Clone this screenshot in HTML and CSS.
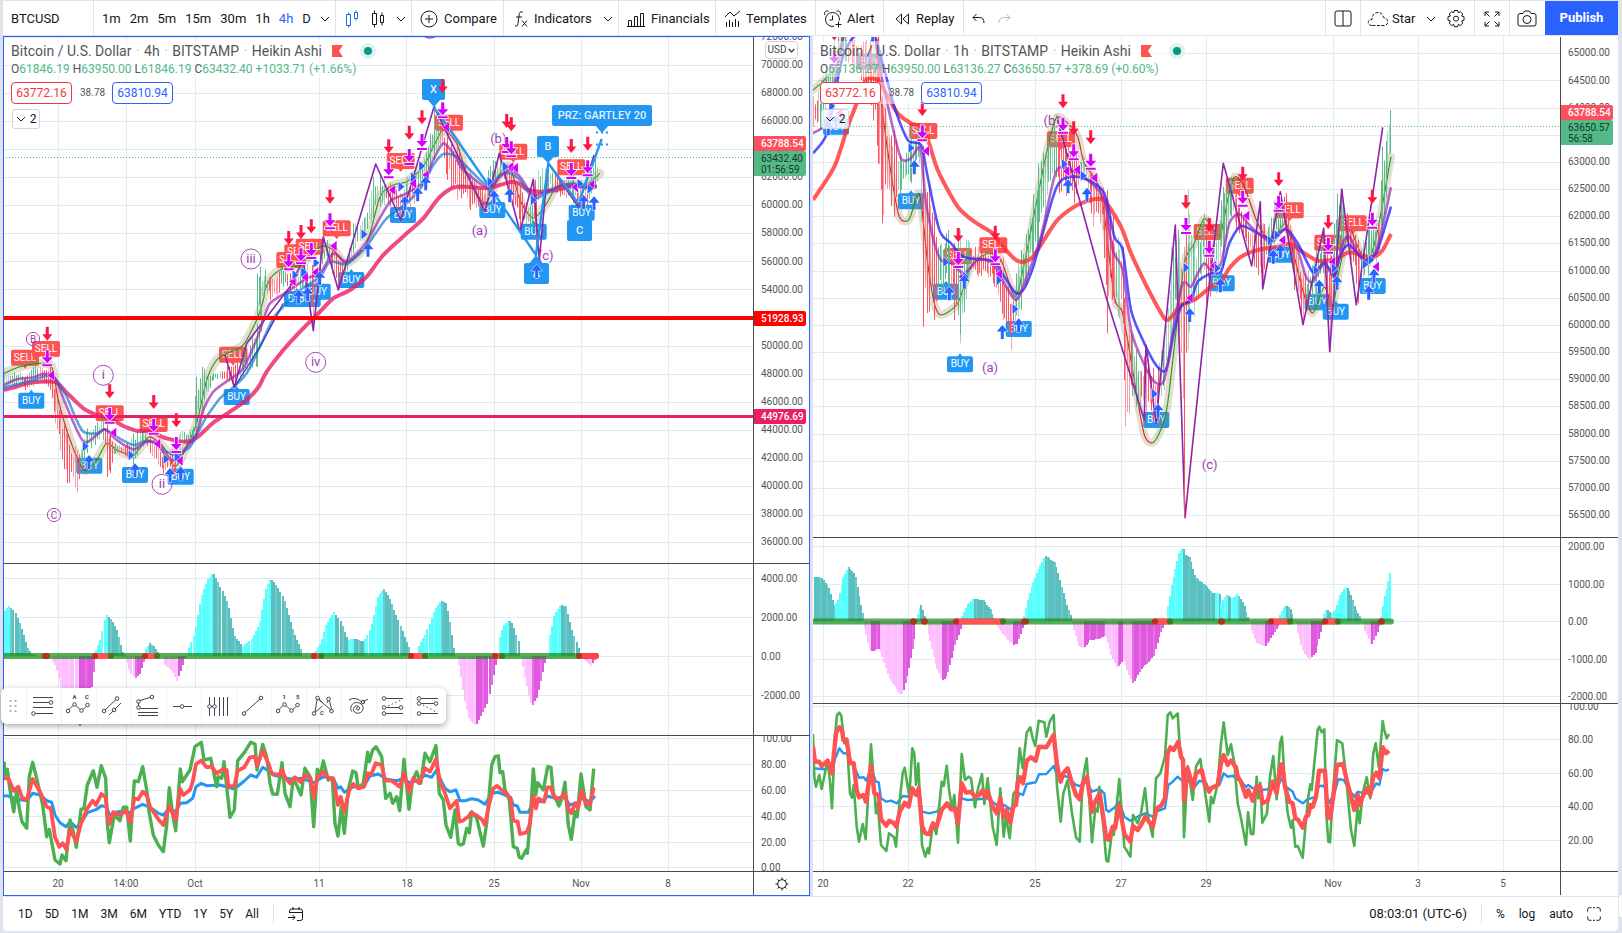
FILE: index.html
```html
<!DOCTYPE html>
<html lang="en">
<head>
<meta charset="utf-8">
<title>BTCUSD 63788.54</title>
<link rel="stylesheet" href="styles.css">
</head>
<body>
<svg class="defs" aria-hidden="true">
  <symbol id="chev" viewBox="0 0 10 6"><path d="M1 1l4 4 4-4"/></symbol>
</svg>

<header class="topbar">
  <div class="group g-symbol"><button class="tool">BTCUSD</button></div>
  <div class="group g-intervals">
    <button class="tool">1m</button><button class="tool">2m</button><button class="tool">5m</button><button class="tool">15m</button><button class="tool">30m</button><button class="tool">1h</button><button class="tool on">4h</button><button class="tool">D</button>
    <button class="tool" aria-label="More intervals"><svg class="chev"><use href="#chev"/></svg></button>
  </div>
  <div class="group g-style">
    <button class="tool on" aria-label="Heikin Ashi"><svg width="16" height="20" viewBox="0 0 16 20"><path d="M2.500 5.500h4v11h-4zM10.500 3.500h3v6h-3zM4.500 3.500v2M4.500 16.500v2M12 1.500v2M12 9.500v2"/></svg></button>
    <button class="tool" aria-label="Candles"><svg width="14" height="20" viewBox="0 0 14 20"><path d="M1.500 4.500h4v11h-4zM9.500 6.500h3v7h-3zM3.500 1.500v3M3.500 15.500v3M11 3.500v3M11 13.500v3"/></svg></button>
    <button class="tool" aria-label="Chart styles"><svg class="chev"><use href="#chev"/></svg></button>
  </div>
  <div class="group g-compare"><button class="tool"><svg width="18" height="18" viewBox="0 0 18 18"><circle cx="9" cy="9" r="8"/><path d="M9 5v8M5 9h8"/></svg>Compare</button></div>
  <div class="group g-indicators">
    <button class="tool"><svg width="14" height="18" viewBox="0 0 14 18"><path d="M9 2.500C7 1 5.500 2 5.200 4.500L4 13.500C3.700 16 2.500 16.800 1 15.800M2 7h6M8 10.500l5 6M13 10.500l-5 6"/></svg>Indicators</button>
    <button class="tool" aria-label="Favorite indicators"><svg class="chev"><use href="#chev"/></svg></button>
  </div>
  <div class="group g-financials"><button class="tool"><svg width="18" height="18" viewBox="0 0 18 18"><path d="M1.500 10.500h3v6h-3zM7.500 6.500h3v10h-3zM13.500 3.500h3v13h-3zM0 16.500h18"/></svg>Financials</button></div>
  <div class="group g-templates"><button class="tool"><svg width="18" height="18" viewBox="0 0 18 18"><path d="M1 7l5-5 4 4 6-5M2.500 12v5M5.500 10v7M8.500 12v5M11.500 9v8M14.500 11v6"/></svg>Templates</button></div>
  <div class="group g-alert"><button class="tool"><svg width="20" height="20" viewBox="0 0 20 20"><path d="M16.400 11.500A7 7 0 1 0 11 17.300M9.500 6.500v4.500h-3M2 6C.5 3.500 3 1 5.500 2.200M17 6C18.500 3.500 16 1 13.500 2.200M15.500 12.500v6M12.500 15.500h6"/></svg>Alert</button></div>
  <div class="group g-replay"><button class="tool"><svg width="15" height="14" viewBox="0 0 15 14"><path d="M6.500 2v10L1 7zM13.500 2v10L8 7z"/></svg>Replay</button></div>
  <div class="group g-undo">
    <button class="tool" aria-label="Undo"><svg width="13" height="12" viewBox="0 0 13 12"><path d="M4.500 1L1 4.500 4.500 8M1 4.500h6.500q4.500 0 4.500 5.500"/></svg></button>
    <button class="tool faint" aria-label="Redo"><svg width="13" height="12" viewBox="0 0 13 12"><path d="M8.500 1L12 4.500 8.500 8M12 4.500H5.500Q1 4.500 1 10"/></svg></button>
  </div>
  <div class="group g-layout"><button class="tool" aria-label="Select layout"><svg width="18" height="17" viewBox="0 0 18 17"><rect x="1" y="1" width="16" height="15" rx="2"/><path d="M9 1v15"/></svg></button></div>
  <div class="group g-cloud">
    <button class="tool"><svg width="22" height="16" viewBox="0 0 22 16"><path stroke-dasharray="3 1.500" d="M5 14.500C0 14.500 0 8.500 5 8.500C5 0 15 -1 16.500 6.500C22 7 22 14.500 17 14.500Z"/></svg>Star</button>
    <button class="tool" aria-label="Manage layouts"><svg class="chev"><use href="#chev"/></svg></button>
    <button class="tool" aria-label="Settings"><svg width="20" height="20" viewBox="0 0 20 20"><path d="M8.300 1.500h3.400l.6 2.200 2-1.100 2.500 2.400-1.200 2 2.400.7v3.600l-2.400.7 1.200 2-2.500 2.500-2-1.200-.6 2.400H8.300l-.6-2.400-2 1.200L3.200 14l1.200-2L2 11.300V7.700L4.400 7l-1.200-2 2.500-2.400 2 1.100z"/><circle cx="10" cy="9.700" r="2.500"/></svg></button>
  </div>
  <div class="group g-full"><button class="tool" aria-label="Fullscreen"><svg width="16" height="16" viewBox="0 0 16 16"><path d="M1 5V1h4M1 1l4.500 4.500M11 1h4v4M15 1l-4.500 4.500M1 11v4h4M1 15l4.500-4.500M15 11v4h-4M15 15l-4.500-4.500"/></svg></button></div>
  <div class="group g-camera"><button class="tool" aria-label="Take a snapshot"><svg width="20" height="17" viewBox="0 0 20 17"><path d="M3 3.500h3l1.500-2.500h5L14 3.500h3q2 0 2 2V14q0 2-2 2H3q-2 0-2-2V5.500q0-2 2-2z"/><circle cx="10" cy="9.500" r="4"/></svg></button></div>
  <button class="publish">Publish</button>
</header>

<main class="charts">
  <section class="chart chart-a active" aria-label="BTCUSD 4h">
    <div class="plot"><svg class="canvas" id="a-main" role="img" aria-label="Price, 4 hours"></svg>
      <div class="legend">
        <h1 class="title">Bitcoin / U.S. Dollar <i>·</i> 4h <i>·</i> BITSTAMP <i>·</i> Heikin Ashi <svg class="flag" viewBox="0 0 11 12"><path d="M0 0h11L7 6l4 6H0z"/></svg><b class="live"></b></h1>
        <p class="ohlc"><span>O<em>61846.19</em></span><span>H<em>63950.00</em></span><span>L<em>61846.19</em></span><span>C<em>63432.40</em></span><em>+1033.71 (+1.66%)</em></p>
        <div class="quotes"><button class="quote sell">63772.16</button><span>38.78</span><button class="quote buy">63810.94</button></div>
        <button class="fold"><svg class="chev"><use href="#chev"/></svg>2</button>
      </div>
    </div>
    <div class="scale"><svg class="canvas" id="a-main-axis"></svg><button class="unit">USD<svg class="chev small"><use href="#chev"/></svg></button></div>
    <div class="plot"><svg class="canvas" id="a-hist" role="img" aria-label="Oscillator histogram"></svg></div>
    <div class="scale"><svg class="canvas" id="a-hist-axis"></svg></div>
    <div class="plot"><svg class="canvas" id="a-rsi" role="img" aria-label="RSI lines"></svg></div>
    <div class="scale"><svg class="canvas" id="a-rsi-axis"></svg></div>
    <div class="plot"><svg class="canvas" id="a-time"></svg></div>
    <div class="scale corner"><button class="tool" aria-label="Scale settings"><svg width="14" height="14" viewBox="0 0 14 14"><circle cx="7" cy="7" r="4.300"/><path d="M7 .5v2M7 11.500v2M.5 7h2M11.500 7h2M2.400 2.400l1.400 1.400M10.200 10.200l1.400 1.400M2.400 11.600l1.400-1.400M10.200 3.800l1.400-1.400"/></svg></button></div>
    <div class="drawbar" role="toolbar" aria-label="Favorite drawing tools">
      <span class="grip"><svg width="8" height="12" viewBox="0 0 8 12"><path stroke-dasharray="2 3" stroke-width="2" d="M1.500 0v12M6.500 0v12"/></svg></span>
      <button aria-label="Fib retracement"><svg viewBox="0 0 24 24"><path d="M2 3.500h20M2 8.500h16M2 13.500h20M4.500 19.500H22"/><circle cx="20" cy="8.500" r="1.800"/><circle cx="2.500" cy="19.500" r="1.800"/></svg></button>
      <button aria-label="ABC correction"><svg viewBox="0 0 24 24"><path d="M3 15.500l4-4M10 11.500l4 4M17 15.500l3-3"/><circle cx="2" cy="17" r="1.800"/><circle cx="8.500" cy="10.500" r="1.800"/><circle cx="15.500" cy="16.500" r="1.800"/><circle cx="21.500" cy="11" r="1.800"/><text x="6.500" y="5">A</text><text x="19" y="5">C</text></svg></button>
      <button aria-label="Parallel channel"><svg viewBox="0 0 24 24"><path d="M4 16L15 5.500M8 21l4-4M14 15l6-6"/><circle cx="3" cy="17" r="1.800"/><circle cx="16" cy="4.500" r="1.800"/><circle cx="13" cy="16" r="1.800"/></svg></button>
      <button aria-label="Trend-based fib"><svg viewBox="0 0 24 24"><path d="M4 6.500l10-3M2.500 9v3M4 14.500h18M2 18.500h20M2 21.500h20"/><circle cx="2.500" cy="7.500" r="1.800"/><circle cx="16" cy="3" r="1.800"/><circle cx="2.500" cy="13.500" r="1.800"/></svg></button>
      <button aria-label="Horizontal line"><svg viewBox="0 0 24 24"><path d="M2 12.500h7M13 12.500h8"/><circle cx="11" cy="12.500" r="1.800"/></svg></button>
      <button aria-label="Fib time zone"><svg viewBox="0 0 24 24"><path d="M3.500 3v7.500M3.500 14v8M8.500 3v7.500M8.500 14v8M13.500 3v19M17.500 3v19M21.500 3v19M5 12.500h2"/><circle cx="3.500" cy="12.500" r="1.800"/><circle cx="8.500" cy="12.500" r="1.800"/></svg></button>
      <button aria-label="Trend line"><svg viewBox="0 0 24 24"><path d="M4 18.500L19 5"/><circle cx="3" cy="19.500" r="1.800"/><circle cx="20" cy="4" r="1.800"/></svg></button>
      <button aria-label="Impulse wave"><svg viewBox="0 0 24 24"><path d="M3 15.500l4-4M10 11.500l4 4M17 15.500l3-3"/><circle cx="2" cy="17" r="1.800"/><circle cx="8.500" cy="10.500" r="1.800"/><circle cx="15.500" cy="16.500" r="1.800"/><circle cx="21.500" cy="11" r="1.800"/><text x="6.500" y="5">1</text><text x="20" y="5">5</text></svg></button>
      <button aria-label="Cypher pattern"><svg viewBox="0 0 24 24"><path d="M4 18L6 5.500M8 5l4 4M16 9l1-2M4.500 18l7-6M18.500 6.500l2 9M7 5l13 11"/><circle cx="3" cy="19.500" r="1.800"/><circle cx="6.500" cy="4" r="1.800"/><circle cx="17.500" cy="5" r="1.800"/><circle cx="20.500" cy="17" r="1.800"/><text x="9" y="21">C</text></svg></button>
      <button aria-label="Fib spiral"><svg viewBox="0 0 24 24"><path d="M3 6q6-4 13 2M22 5l-5 3M12 13a1.500 1.500 0 1 0 1.500 1.500c0-4-6-3.500-6 1s7 5 9 1c2-4-1-8-6-8s-7 6-5 9"/><circle cx="17" cy="8" r="1.800"/></svg></button>
      <button aria-label="Long position"><svg viewBox="0 0 24 24"><path d="M5 4.500h17M5 13.500h13M5 19.500h17"/><path stroke-dasharray="1.500 2.500" d="M7 12l13-6"/><circle cx="3" cy="4.500" r="1.800"/><circle cx="3" cy="13.500" r="1.800"/><circle cx="20" cy="13.500" r="1.800"/><circle cx="3" cy="19.500" r="1.800"/></svg></button>
      <button aria-label="Short position"><svg viewBox="0 0 24 24"><path d="M5 4.500h17M5 9.500h13M5 19.500h17"/><path stroke-dasharray="1.500 2.500" d="M7 11l13 7"/><circle cx="3" cy="4.500" r="1.800"/><circle cx="3" cy="9.500" r="1.800"/><circle cx="20" cy="9.500" r="1.800"/><circle cx="3" cy="19.500" r="1.800"/></svg></button>
    </div>
  </section>

  <section class="chart chart-b" aria-label="BTCUSD 1h">
    <div class="plot"><svg class="canvas" id="b-main" role="img" aria-label="Price, 1 hour"></svg>
      <div class="legend">
        <h2 class="title">Bitcoin / U.S. Dollar <i>·</i> 1h <i>·</i> BITSTAMP <i>·</i> Heikin Ashi <svg class="flag" viewBox="0 0 11 12"><path d="M0 0h11L7 6l4 6H0z"/></svg><b class="live"></b></h2>
        <p class="ohlc"><span>O<em>63136.27</em></span><span>H<em>63950.00</em></span><span>L<em>63136.27</em></span><span>C<em>63650.57</em></span><em>+378.69 (+0.60%)</em></p>
        <div class="quotes"><button class="quote sell">63772.16</button><span>38.78</span><button class="quote buy">63810.94</button></div>
        <button class="fold"><svg class="chev"><use href="#chev"/></svg>2</button>
      </div>
    </div>
    <div class="scale"><svg class="canvas" id="b-main-axis"></svg></div>
    <div class="plot"><svg class="canvas" id="b-hist" role="img" aria-label="Oscillator histogram"></svg></div>
    <div class="scale"><svg class="canvas" id="b-hist-axis"></svg></div>
    <div class="plot"><svg class="canvas" id="b-rsi" role="img" aria-label="RSI lines"></svg></div>
    <div class="scale"><svg class="canvas" id="b-rsi-axis"></svg></div>
    <div class="plot"><svg class="canvas" id="b-time"></svg></div>
    <div class="scale corner"></div>
  </section>
</main>

<footer class="bottombar">
  <div class="ranges">
    <button class="tool">1D</button><button class="tool">5D</button><button class="tool">1M</button><button class="tool">3M</button><button class="tool">6M</button><button class="tool">YTD</button><button class="tool">1Y</button><button class="tool">5Y</button><button class="tool">All</button>
  </div>
  <span class="rule"></span>
  <button class="tool" aria-label="Go to date"><svg width="16" height="15" viewBox="0 0 16 15"><path d="M1.500 6V4q0-2 2-2h9q2 0 2 2v7.500q0 2-2 2H9M1.500 5.500h13M5 0v3M11 0v3M0 10.500h7M4.500 8L7 10.500 4.500 13"/></svg></button>
  <div class="status">
    <button class="tool clock">08:03:01 (UTC-6)</button>
    <span class="rule"></span>
    <button class="tool">%</button><button class="tool">log</button><button class="tool">auto</button>
    <button class="tool" aria-label="Maximize chart"><svg width="14" height="14" viewBox="0 0 14 14"><path d="M.7 4.500v-2q0-1.800 1.800-1.800h2M9.500.7h2q1.800 0 1.800 1.800v2M13.300 9.500v2q0 1.800-1.800 1.800h-2M4.500 13.300h-2q-1.800 0-1.800-1.800v-2M6 .7h2M6 13.300h2"/></svg></button>
  </div>
</footer>
<button class="sidetab" aria-label="Show side panel"></button>
<script src="charts.js"></script>
</body>
</html>
```
FILE: styles.css
```css
* { box-sizing: border-box; }
html, body { height: 100%; }
body {
  margin: 0;
  padding: 1px 4px 2px 3px;
  display: flex;
  flex-direction: column;
  background: #e0e3eb;
  color: #131722;
  font: 12px/16px "Trebuchet MS", Roboto, "Liberation Sans", sans-serif;
  overflow: hidden;
}
button { font: inherit; color: inherit; background: none; border: 0; padding: 0; margin: 0; cursor: pointer; }
svg { fill: none; stroke: currentColor; flex: none; }
.defs { position: absolute; width: 0; height: 0; }
.chev { width: 10px; height: 6px; }
.chev.small { width: 7px; height: 5px; stroke-width: 2; }

/* top toolbar */
.topbar { flex: none; display: flex; height: 35px; background: #fff; border-bottom: 1px solid #e0e3eb; font-size: 13px; white-space: nowrap; }
.group { flex: none; display: flex; align-items: center; justify-content: space-between; border-right: 1px solid #e0e3eb; padding: 0 8px; }
.tool { display: flex; align-items: center; gap: 6px; }
.topbar .tool { padding-top: 1px; }
.tool.on { color: #2962ff; }
.tool.faint { color: #b8bbc4; }
.g-symbol { width: 91px; }
.g-intervals { width: 242px; padding: 0 5px 0 8px; }
.g-style { width: 76px; padding: 0 5px 0 8px; }
.g-compare { width: 92px; }
.g-indicators { width: 115px; padding: 0 5px 0 10px; }
.g-financials { width: 97px; }
.g-templates { width: 100px; }
.g-templates .tool, .g-alert .tool { gap: 4px; }
.g-alert { width: 68px; padding: 0 8px 0 7px; }
.g-replay { width: 80px; padding: 0 8px 0 11px; }
.g-undo { border-right: 0; gap: 13px; margin-right: auto; }
.g-layout { width: 36px; border-left: 1px solid #e0e3eb; }
.g-cloud { width: 114px; padding: 0 8px 0 6px; }
.g-cloud .tool { gap: 3px; }
.g-full { width: 35px; padding: 0 9px; }
.g-camera { width: 35px; padding: 0 7px; border-right: 0; }
.publish { flex: none; width: 73px; background: #2962ff; color: #fff; font-weight: 700; }

/* chart grid */
.charts { flex: 1; min-height: 0; display: flex; gap: 3px; }
.chart { position: relative; flex: 1; min-width: 0; display: grid; background: #fff; border: 1px solid #fff; }
.chart.active { border-color: #2962ff; }
.chart-a { grid-template-columns: minmax(0, 1fr) 56px; grid-template-rows: minmax(0, 1fr) 172px 136px 24px; }
.chart-b { grid-template-columns: minmax(0, 1fr) 58px; grid-template-rows: minmax(0, 1fr) 166px 168px 24px; border-width: 1px 0; }
.plot, .scale { position: relative; min-width: 0; min-height: 0; overflow: hidden; }
.scale { border-left: 1px solid #4a4a4a; }
.scale ~ .plot, .scale ~ .scale { border-top: 1px solid #4a4a4a; }
.canvas { position: absolute; inset: 0; width: 100%; height: 100%; stroke: none; }
.corner { display: flex; align-items: center; justify-content: center; }
.unit { position: absolute; top: 4px; left: 11px; width: 33px; height: 18px; display: flex; align-items: center; justify-content: center; gap: 2px; background: #fff; border: 1px solid #d1d4dc; border-radius: 4px; font-size: 10px; color: #434651; }

/* legend over the price pane */
.legend { position: relative; padding: 4px 0 0 7px; width: max-content; display: flex; flex-direction: column; align-items: flex-start; }
.title { margin: 0; display: flex; align-items: center; height: 20px; gap: 1px; background: rgba(255,255,255,.5); font-size: 14px; font-weight: 400; color: #555; white-space: pre; }
.title i { color: #b2b5be; font-style: normal; }
.flag { width: 11px; height: 12px; margin: 0 16px 0 6px; fill: #ff5252; stroke: none; }
.live { width: 8px; height: 8px; margin: 0 4px; border-radius: 50%; background: #089981; box-shadow: 0 0 0 4px #dff2ee; }
.ohlc { margin: 0; display: flex; gap: 3px; background: rgba(255,255,255,.5); color: #555; }
.ohlc em { font-style: normal; color: #53b987; }
.quotes { display: flex; align-items: center; gap: 8px; margin-top: 5px; background: rgba(255,255,255,.5); font-size: 10px; color: #555; }
.quote { width: 61px; height: 22px; border: 1px solid; border-radius: 4px; background: #fff; font-size: 12px; }
.quotes span { width: 24px; }
.sell { color: #f23645; }
.buy { color: #2962ff; }
.fold { display: flex; align-items: center; justify-content: center; gap: 4px; width: 28px; height: 20px; margin: 5px 0 0 1px; border: 1px solid #d1d4dc; border-radius: 3px; background: rgba(255,255,255,.8); }

/* floating drawing tools */
.drawbar { position: absolute; left: -3px; bottom: 171px; display: flex; height: 36px; background: #fff; border-radius: 6px; box-shadow: 0 2px 6px rgba(0,0,0,.35); color: #434651; }
.drawbar > * { width: 35px; padding-right: 2px; display: flex; align-items: center; justify-content: center; border-left: 1px solid #f0f3fa; }
.drawbar .grip { width: 25px; border: 0; color: #b2b5be; }
.drawbar button svg { width: 24px; height: 24px; }
.drawbar text { font-size: 6px; font-weight: 700; fill: currentColor; stroke: none; }

/* bottom bar */
.bottombar { flex: none; display: flex; align-items: center; height: 35px; padding: 0 17px 0 15px; background: #fff; border-top: 1px solid #e0e3eb; border-radius: 0 0 4px 4px; font-size: 12px; white-space: nowrap; }
.ranges { display: flex; gap: 12px; }
.rule { width: 1px; height: 20px; margin: 0 14px; background: #e0e3eb; }
.status { margin-left: auto; display: flex; align-items: center; gap: 14px; }
.status .rule { margin: 0; }
.clock { font-size: 13px; }
.sidetab { position: absolute; right: 0; top: 895px; width: 3px; height: 22px; background: #fff; border-radius: 4px 0 0 4px; }

/* chart drawing */
.axis { font-size: 10px; fill: #555; }
.axis-tag { font-size: 10px; font-weight: 500; fill: #fff; }
.axis-tag.dark { fill: #16382a; font-weight: 400; }
.mark { font-size: 10px; fill: #fff; text-anchor: middle; }
.tag { font-size: 11px; font-weight: 500; fill: #e3f2fd; text-anchor: middle; }
.wave { font-size: 13px; fill: #9c3fb4; text-anchor: middle; }
.wave.small { font-size: 10px; }
.center { text-anchor: middle; }
```
FILE: charts.js
```js
// All series are stored in thirds of a pixel, relative to a tile's origin: "x,y x,y ...".
const T = { p: [0, 300], q: [240, 60], h: [0, 560], i: [440, 560], r: [810, 30], s: [1190, 90], u: [810, 530], v: [1200, 530] };
const pts = (tile, str) => str.trim().split(/\s+/).map(s => { const n = s.split(',').map(Number); return [T[tile][0] + n[0] / 3, T[tile][1] + n[1] / 3]; });
const cat = o => Object.entries(o).flatMap(([k, v]) => pts(k, v));
const f = n => n.toFixed(1);
const line = (p, color, w, extra = '') => `<polyline points="${p.map(a => f(a[0]) + ',' + f(a[1])).join(' ')}" fill="none" stroke="${color}" stroke-width="${w}" stroke-linejoin="round" ${extra}/>`;
// Catmull-Rom subdivision, for the moving averages
function smooth(p) {
  const out = [];
  for (let j = 0; j + 1 < p.length; j++) {
    const a = p[j - 1] || p[j], b = p[j], c = p[j + 1], d = p[j + 2] || c;
    for (let s = 0; s < 5; s++) {
      const t = s / 5, g = i => {
        const m0 = (c[i] - a[i]) / 2.6, m1 = (d[i] - b[i]) / 2.6;
        return (2 * t ** 3 - 3 * t * t + 1) * b[i] + (t ** 3 - 2 * t * t + t) * m0 + (3 * t * t - 2 * t ** 3) * c[i] + (t ** 3 - t * t) * m1;
      };
      out.push([g(0), g(1)]);
    }
  }
  out.push(p[p.length - 1]);
  return out;
}
let seed = 7;
const rnd = () => (seed = (seed * 16807) % 2147483647) / 2147483647;
const put = (id, ox, oy, body) => { document.getElementById(id).innerHTML = `<g transform="translate(${-ox},${-oy})">${body}</g>`; };
const grid = (xs, ys) => [...xs.map(x => `<path d="M${x} 0V1200" stroke="#e1ecf2"/>`), ...ys.map(y => `<path d="M0 ${y}H2400" stroke="#e1ecf2"/>`)].join('');

// Candle wicks between a high and a low envelope: "x,high,low,colour"
function candles(groups, step) {
  const rows = Object.entries(groups).flatMap(([k, v]) => v.trim().split(/\s+/).map(s => { const a = s.split(','); return [T[k][0] + a[0] / 3, T[k][1] + a[1] / 3, T[k][1] + a[2] / 3, a[3]]; }));
  let out = '';
  for (let j = 0; j + 1 < rows.length; j++) {
    const a = rows[j], b = rows[j + 1];
    for (let x = a[0]; x < b[0]; x += step) {
      const t = (x - a[0]) / (b[0] - a[0]), hi = a[1] + (b[1] - a[1]) * t, lo = a[2] + (b[2] - a[2]) * t, h = lo - hi;
      const y1 = hi + (x === a[0] ? 0 : rnd() * h * .35), y2 = lo - (x === a[0] ? 0 : rnd() * h * .35);
      const c = (t < .5 ? a[3] : b[3]) === 'g' ? '#53b987' : '#ff4d5c';
      out += `<path d="M${Math.round(x) + .5} ${f(y1)}V${f(y2)}" stroke="${c}" stroke-opacity="${rnd() > .35 ? .95 : .55}"/>`;
    }
  }
  return out;
}
function bars(list, base, step, width) {
  let out = '';
  for (const [tile, str] of list) {
    const p = pts(tile, str);
    for (let j = 0; j + 1 < p.length; j++) {
      const [x0, y0] = p[j], [x1, y1] = p[j + 1];
      const neg = (y0 + y1) / 2 > base, grow = neg ? y1 > y0 : y1 < y0;
      const c = neg ? (grow ? '#ffbfff' : '#df59df') : (grow ? '#59ffff' : '#59bfbf');
      for (let k = Math.ceil(x0 / step); k * step < x1; k++) {
        const x = k * step, y = y0 + (y1 - y0) * (x - x0) / (x1 - x0);
        out += `<rect x="${f(x)}" y="${f(Math.min(y, base))}" width="${width}" height="${f(Math.abs(y - base))}" fill="${c}"${k % 4 === 1 ? ' opacity=".85"' : ''} shape-rendering="crispEdges"/>`;
      }
    }
  }
  return out;
}
function zero(x0, x1, y, reds) {
  return `<path d="M${x0} ${y}H${x1}" stroke="#118a11" stroke-opacity=".7" stroke-width="6" stroke-linecap="round"/>` +
    reds.map(([a, b]) => `<path d="M${f(a)} ${y}H${f(b)}" stroke="#ff5252" stroke-width="6"/><circle cx="${f(a)}" cy="${y}" r="3" fill="#c62828"/><circle cx="${f(b)}" cy="${y}" r="3" fill="${b - a < 5 ? '#a33a1a' : '#3f7a1e'}"/>`).join('');
}

const glyph = {
  sell: (x, y) => `<path d="M${x - 3} ${y + 7}h6l-3 4z" fill="#ff5252"/><rect x="${x - 14}" y="${y - 8}" width="28" height="16" rx="2" fill="#ff5252"/><text class="mark" x="${x}" y="${y + 3}">SELL</text>`,
  buy: (x, y) => `<path d="M${x - 3} ${y - 7}h6l-3 -4z" fill="#2196f3"/><rect x="${x - 13}" y="${y - 8}" width="26" height="16" rx="2" fill="#2196f3"/><text class="mark" x="${x}" y="${y + 3}">BUY</text>`,
  down: (x, y) => `<path d="M${x - 1.5} ${y - 7}h3v7.500h3.500l-5 6.500l-5 -6.500h3.500z" fill="#ff1744"/>`,
  mag: (x, y) => `<path d="M${x - 1.500} ${y - 8}h3v7h4l-5.500 6l-5.500 -6h4zM${x - 5} ${y + 6}h10v2h-10z" fill="#d500f9" stroke="#fff" stroke-width="1.500" paint-order="stroke"/>`,
  left: (x, y) => `<path d="M${x - 3.5} ${y}l6.500 -5v10z" fill="#d500f9" stroke="#fff" stroke-width="1" paint-order="stroke"/>`,
  right: (x, y) => `<path d="M${x + 3.500} ${y}l-6 -5v10z" fill="#2962ff" stroke="#fff" stroke-width="1" paint-order="stroke"/>`,
  up: (x, y) => `<path d="M${x} ${y - 7}l5.500 6.500h-4v7.500h-3v-7.500h-4z" fill="#2962ff" stroke="#fff" stroke-width="1" paint-order="stroke"/>`
};
const marks = (kind, o) => cat(o).map(a => glyph[kind](+f(a[0]), +f(a[1]))).join('');
const wave = (tile, x, y, r, t) => { const [[cx, cy]] = pts(tile, `${x},${y}`); return (r ? `<circle cx="${f(cx)}" cy="${f(cy)}" r="${r}" fill="none" stroke="#ab47bc"/>` : '') + `<text class="wave${r && r < 8 ? ' small' : ''}" x="${f(cx)}" y="${f(cy + 4)}">${t}</text>`; };
const box = (x, y, w, h, px, py, t) => `<rect x="${x}" y="${y}" width="${w}" height="${h}" rx="2" fill="#2196f3"/><path d="M${px - 7} ${py > y ? y + h - 1 : y + 1}h14L${px} ${py}z" fill="#2196f3"/><text class="tag" x="${x + w / 2}" y="${y + h / 2 + 3}">${t}</text>`;
const band = (raw, w) => { const p = smooth(raw); return line(p, '#a08a5a', w, 'stroke-opacity=".28" stroke-linecap="round"') + p.slice(1).map((b, j) => line([p[j], b], b[1] < p[j][1] ? '#1a9a1a' : '#c62828', 1.1)).join(''); };

// ---------- 4h chart ----------
const ax = [58.5, 126.5, 195.5, 319.5, 406.5, 494.5, 581.5, 668.5];
const aLabels = []; for (let k = 0; k < 19; k++) aLabels.push([72000 - 2000 * k, 37.3 + 28.02 * k]);
const aBand = cat({
  p: '12,220 60,200 120,190 155,200 175,300 200,390 230,470 255,512 290,480 320,430 350,450 400,465 430,430 450,410 490,440 525,500 560,440 590,370 620,240 650,180 690,155 730,135 770,60 790,0',
  q: '75,690 95,650 130,625 180,615 240,560 280,570 320,610 380,550 420,410 460,375 500,365 550,320 580,260 610,210 650,250 680,340 735,430 780,340 810,320 840,420 880,475 920,430 950,380 1000,370 1040,372 1080,340' });
put('a-main', 4, 37, grid(ax, aLabels.map(l => Math.round(l[1]) + .5)) +
  '<path d="M0 157.500H2400" stroke="#53b987" stroke-dasharray="1 2"/>' +
  marks('sell', { p: '75,173 138,147 329,340 461,372 699,164', q: '151,600 175,577 209,560 290,505 482,303 627,188 820,275 994,322' }) +
  marks('buy', { p: '94,302 268,497 405,525 542,530 710,291', q: '171,717 203,717 233,695 334,660 489,465 757,450 881,515 1025,458' }) +
  band(aBand, 9) +
  candles({
    p: '12,215,265,g 60,215,260,g 75,230,270,r 100,190,260,g 125,205,250,r 150,200,270,r 165,230,370,r 180,330,450,r 200,390,550,r 230,450,578,r 245,430,500,g 260,385,460,g 310,355,420,g 322,350,530,r 330,400,520,r 345,430,460,g 380,430,470,r 400,400,500,g 430,380,440,g 450,400,460,r 490,450,520,r 525,440,530,r 540,395,460,g 580,380,430,g 587,230,420,g 605,200,330,g 640,220,240,g 680,200,240,r 700,200,262,r 730,150,230,g 770,70,200,g 785,0,120,g',
    q: '50,640,780,g 60,620,780,g 75,630,690,g 90,650,720,r 110,650,710,r 130,600,680,g 150,640,700,r 190,620,680,g 220,600,810,r 240,570,650,g 260,540,600,g 275,560,640,r 295,600,690,r 320,590,640,g 340,490,580,g 375,470,530,g 400,350,480,g 420,340,440,g 450,370,440,r 480,400,470,r 500,350,430,g 510,350,470,r 545,310,380,g 570,220,340,g 582,150,300,g 595,150,260,g 605,190,260,r 620,230,360,r 650,260,420,r 690,340,450,r 735,380,450,r 745,330,400,g 760,300,390,g 780,285,350,g 800,310,390,r 840,380,510,r 870,430,500,g 885,360,500,r 889,400,600,r 895,330,420,g 925,310,390,g 960,360,410,r 1000,340,430,g 1015,370,440,r 1040,370,440,r 1052,330,400,g 1065,280,380,g 1072,300,380,g' }, 2.07) +
  line(smooth(cat({
    p: '12,270 50,260 90,248 165,246 200,278 250,325 290,345 330,355 370,378 410,392 450,395 490,412 520,420 545,425 575,422 600,405 640,368 690,335 740,300 775,262 800,215 850,150 900,95 960,35',
    q: '280,715 330,690 380,650 430,585 500,520 550,475 600,410 650,380 740,385 780,375 815,366 840,372 860,388 900,395 960,388 1000,378 1070,380' })), '#e91e63', 4, 'stroke-opacity=".8"') +
  line(smooth(cat({
    p: '12,262 70,248 100,240 140,228 165,235 200,290 225,350 250,395 290,400 315,388 350,410 400,435 440,422 470,432 500,455 530,465 570,440 595,395 620,350 660,295 700,262 740,220 780,140 820,55',
    q: '130,740 180,690 240,650 270,605 320,612 370,570 400,530 440,475 500,430 545,380 580,315 610,282 650,290 690,330 745,378 780,345 810,340 840,360 880,415 920,400 960,380 1000,370 1040,385 1070,378' })), '#2079cf', 2.6, 'stroke-opacity=".7"') +
  line(smooth(cat({
    p: '12,255 50,238 100,232 130,222 165,235 200,320 250,425 290,405 315,388 350,420 400,448 440,425 470,430 500,470 525,480 560,440 590,400 610,330 640,275 690,237 730,205 775,105 800,30',
    q: '95,725 150,690 200,655 240,640 280,580 320,605 370,560 400,510 450,425 500,400 550,365 580,300 610,250 640,280 670,330 745,385 780,350 810,330 840,350 880,405 930,390 970,375 1010,382 1070,378' })), '#9c27b0', 2.6, 'stroke-opacity=".7"') +
  line(cat({ p: '675,165 703,262', q: '20,850 150,680 190,600 220,812 250,530 295,690 407,312 482,480 582,140 735,455 778,280 840,515 880,358 898,600 925,310 1015,440 1062,285' }), '#8e24aa', 1.6) +
  line(cat({ p: '703,262 780,140 850,10' }), '#3f3fc0', 1.4) +
  line(cat({ q: '582,140 745,375 888,585 925,310 1015,430 1085,237' }), '#2196f3', 2.4) +
  '<path d="M0 318H2400" stroke="#f00" stroke-width="4"/><path d="M0 416.500H2400" stroke="#e91e63" stroke-width="3"/>' +
  '<path d="M596 132.500h14M596 144.500h14" stroke="#2196f3" stroke-width="2" stroke-dasharray="2 3"/>' +
  box(422, 79, 23, 21, 434, 107, 'X') + box(537, 136, 22, 21, 548, 163, 'B') + box(567, 220, 25, 21, 578, 221, 'C') + box(524, 263, 25, 21, 536, 255, 'A') + box(552, 105, 100, 21, 602, 133, 'PRZ: GARTLEY 20') +
  wave('p', 99, 117, 6.6, 'B') + wave('p', 162, 645, 6.6, 'C') + wave('p', 310, 226, 10, 'i') + wave('p', 486, 553, 10, 'ii') + wave('p', 947, 187, 10, 'iv') + wave('q', 33, 597, 10, 'iii') +
  wave('q', 719, 513, 0, '(a)') + wave('q', 775, 237, 0, '(b)') + wave('q', 917, 588, 0, '(c)') +
  '<circle cx="430" cy="28" r="10" fill="none" stroke="#ab47bc" stroke-width="1.500"/>' +
  marks('left', { p: '153,226 340,398 472,431 539,482', q: '158,664 195,652 226,637 281,558 457,390 519,370 557,345 618,202 811,321 825,324 1005,382 1054,374' }) +
  marks('right', { p: '256,439 393,466 498,477 531,471', q: '165,645 191,637 228,608 372,523 483,380 520,352 545,318 750,365 796,320 880,421 1020,371 1050,386' }) +
  marks('up', { p: '267,486 405,511 510,525 542,521', q: '176,710 203,703 239,655 384,569 495,429 533,403 557,370 762,412 809,406 890,634 1031,426 1062,430' }) +
  marks('mag', { p: '142,175 329,347 461,380 529,435', q: '146,607 183,589 214,573 270,484 446,331 508,291 546,246 608,151 800,255 814,268 994,333 1043,325' }) +
  marks('down', { p: '142,101 329,274 461,306 529,361', q: '146,534 183,516 214,499 270,410 446,259 508,218 546,172 608,78 800,183 814,193 994,258 1043,251' }));

const axisText = (x, list) => list.map(([t, y]) => `<text class="axis" x="${x}" y="${f(y + 3)}">${t.toFixed(2)}</text>`).join('');
const tag = (x, y, h, c, rows, cls = '') => `<rect x="${x}" y="${y}" width="53" height="${h}" rx="2" fill="${c}"/>` + rows.map((t, k) => `<text class="axis-tag ${cls}" x="${x + 8}" y="${y + 11 + 11 * k}">${t}</text>`).join('');
put('a-main-axis', 753, 37, axisText(760, aLabels.filter(l => l[0] !== 64000 && l[0] !== 52000)) +
  tag(752, 151, 25, '#53b987', ['63432.40', '01:56:59'], 'dark') + tag(752, 136, 15, '#ff4f5e', ['63788.54']) + tag(752, 311, 15, '#f00', ['51928.93']) + tag(752, 409, 15, '#e91e63', ['44976.69']));

const aHist = [[4000, 578.5], [2000, 617.5], [0, 656.5], [-2000, 695.5]];
put('a-hist', 4, 564, grid(ax, aHist.map(l => l[1])) + bars([
  ['h', '12,152 25,138 40,152 60,200 80,262 95,283 120,289'], ['h', '285,270 300,235 310,180 318,163 335,185 350,215 365,275 375,289'], ['h', '430,275 447,250 460,258 475,280'],
  ['h', '560,280 580,220 600,110 620,58 638,38 655,72 680,130 700,225 725,258 750,240 775,190 795,85 810,55 830,80 850,120 880,220 905,278'],
  ['h', '940,280 960,245 975,195 1000,155 1020,185 1040,240 1060,235 1090,245 1110,200 1130,110 1147,85 1165,110 1190,175 1215,240 1230,280'],
  ['h', '1250,265 1275,220 1300,150 1320,120 1337,130 1350,200 1362,275'], ['i', '172,250 185,200 205,180 215,190 235,250'], ['i', '320,250 340,160 360,135 375,138 395,215 415,270'],
  ['h', '150,300 165,320 180,380 200,450 235,500 260,450 275,370 285,291'], ['h', '375,300 390,340 402,355 415,345 430,300'], ['h', '485,310 510,330 528,362 545,320 555,291'],
  ['i', '50,300 70,420 85,480 105,498 125,460 140,430 165,310'], ['i', '240,300 260,390 273,440 290,410 315,300'], ['i', '430,300 450,318 465,295']], 656.3, 2.07, 2) +
  zero(4, 596, 656, [[45, 47], [95, 111], [145, 157], [314, 321], [411, 425], [495, 502]]) +
  '<path d="M580 656H596" stroke="#ff4343" stroke-width="6" stroke-linecap="round"/><circle cx="579" cy="656" r="3" fill="#a33a1a"/>');
put('a-hist-axis', 753, 564, axisText(760, aHist));

const aRsi = [[100, 738.5], [80, 764.5], [60, 790.5], [40, 816.5], [20, 842.5], [0, 867.5]];
put('a-rsi', 4, 736, grid(ax, aRsi.map(l => l[1])) +
  line(cat({
    h: '12,707 25,708 50,718 80,722 98,700 120,705 140,722 155,727 165,765 180,788 198,800 210,785 229,802 243,790 262,758 290,748 304,737 320,740 328,765 345,757 378,752 391,760 403,745 428,733 450,742 475,760 490,765 508,745 527,755 541,730 560,728 578,715 588,680 604,670 620,677 660,675 685,682 703,687 733,663 752,645 770,652 788,622 805,632 820,645 870,657 905,655 941,668 970,650 1000,655 1014,685 1022,680 1033,697 1060,680 1090,682 1110,648 1135,642 1160,658 1190,662 1212,655 1227,668 1258,660 1275,645 1295,652 1308,632 1320,655 1335,685 1350,695 1368,690 1380,722',
    i: '75,722 95,716 115,720 135,733 155,700 175,697 212,712 220,735 232,738 240,757 265,757 280,725 310,725 322,708 345,715 372,712 390,735 412,728 425,715 450,725 465,708' }), '#2196f3', 3) +
  line(cat({
    h: '12,605 15,645 22,628 30,690 41,755 50,690 58,745 66,785 80,805 88,650 98,607 110,655 128,735 140,830 148,808 165,900 180,912 186,885 198,902 210,780 220,815 229,862 243,748 252,745 262,675 280,632 291,682 304,617 317,655 322,790 328,848 343,765 360,782 370,742 380,742 391,843 403,663 415,665 428,620 440,690 448,760 460,825 475,855 490,875 500,795 508,683 518,765 527,812 541,627 547,665 570,630 585,560 604,547 612,600 632,595 650,680 655,650 665,655 672,605 690,772 703,750 713,602 733,578 752,547 765,552 771,630 788,553 800,590 810,670 818,702 832,703 846,608 855,700 870,740 880,655 890,675 903,705 915,625 930,650 941,800 952,628 962,640 970,603 985,660 997,655 1005,790 1014,828 1024,740 1033,820 1045,690 1058,633 1068,638 1075,685 1090,670 1103,577 1108,605 1118,570 1128,560 1145,590 1157,715 1170,700 1178,730 1190,710 1199,752 1212,598 1227,748 1237,665 1250,635 1262,670 1275,580 1290,605 1308,557 1318,700 1330,720 1338,795 1352,832 1365,750 1375,850',
    i: '62,855 70,852 80,805 88,818 95,755 110,775 130,858 140,790 155,615 165,590 175,588 180,638 188,635 195,690 208,720 220,860 232,865 238,892 245,895 258,870 262,880 270,790 280,627 287,705 293,668 310,690 323,620 333,622 340,700 357,738 366,715 375,667 385,795 394,838 405,755 412,770 423,642 438,740 450,750 461,626' }), '#4caf50', 3.4) +
  line(cat({
    h: '12,655 25,655 41,692 55,680 66,712 80,720 98,657 120,695 140,740 152,745 165,832 178,860 188,850 199,868 210,808 229,845 243,790 262,745 278,722 288,735 304,702 317,712 322,765 328,792 340,757 360,765 378,752 391,787 403,715 415,718 428,695 440,705 450,740 475,778 490,795 508,738 527,780 541,687 550,705 570,690 578,665 588,612 604,602 620,622 635,620 650,640 665,630 680,630 685,680 703,678 713,632 733,622 750,592 765,590 771,618 788,572 805,610 815,640 838,645 846,628 855,652 870,670 885,652 903,667 915,645 932,655 941,712 952,655 970,635 985,655 1000,655 1014,735 1022,710 1033,755 1047,692 1060,672 1075,685 1092,680 1103,640 1113,645 1127,610 1145,615 1155,662 1175,662 1199,680 1212,640 1227,695 1240,655 1258,670 1275,625 1290,635 1308,597 1320,665 1335,700 1350,745 1370,722 1378,785',
    i: '68,782 85,770 93,758 108,765 125,778 135,795 148,730 160,685 172,678 185,690 200,700 212,720 220,782 233,785 240,822 260,817 270,790 280,707 288,745 295,715 312,725 322,682 333,682 342,712 358,717 375,700 385,745 394,760 405,730 414,745 425,692 437,732 450,733 461,682' }), '#ff5252', 3.8));
put('a-rsi-axis', 753, 736, axisText(760, aRsi));
const timeText = list => list.map(([t, x]) => `<text class="axis center" x="${x}" y="887">${t}</text>`).join('');
put('a-time', 4, 872, timeText([['20', 58], ['14:00', 126], ['Oct', 195], ['11', 319], ['18', 407], ['25', 494], ['Nov', 581], ['8', 668]]));

// ---------- 1h chart ----------
const bx = [822.5, 907.5, 1034.5, 1120.5, 1205.5, 1332.5, 1417.5, 1502.5];
const bLabels = []; for (let k = 0; k < 18; k++) bLabels.push([65000 - 500 * k, 53.3 + 27.16 * k]);
const B1 = { r: '6,180 40,150 80,100 100,10' };
const bBand = cat({
  r: '190,-20 210,210 240,430 265,560 295,568 325,490 350,700 370,820 390,855 440,820 480,710 530,670 570,690 612,800 640,700 700,400 735,265 770,280 800,320 820,400 870,490 910,800 935,850 970,1050 1000,1215 1030,1235 1065,1150 1090,950 1120,700 1150,640 1180,565',
  s: '75,430 90,430 110,330 130,260 160,290 200,400 240,450 285,400 310,500 335,600 365,670 400,590 425,650 445,540 475,420 500,470 530,520 560,420 600,200' });
put('b-main', 812, 37, grid(bx, bLabels.map(l => Math.round(l[1]) + .5)) +
  '<path d="M0 126.500H2400" stroke="#53b987" stroke-dasharray="1 2"/>' +
  marks('sell', { r: '337,303 441,678 547,646 750,328 1190,606', s: '146,287 296,361 412,458 485,400' }) +
  marks('buy', { r: '75,290 175,95 300,514 405,785 447,1003 623,897 1036,1170', s: '92,580 270,494 380,637 434,665 545,588' }) +
  band(cat(B1), 8) + band(bBand, 8) +
  candles({
    r: '6,200,290,r 30,150,300,g 70,30,200,g 90,0,100,g 130,30,130,r 165,30,180,r 200,20,400,r 212,200,580,r 250,300,560,r 270,390,480,g 300,290,460,g 325,290,400,g 337,350,890,r 370,560,870,r 390,640,790,g 410,600,790,g 430,640,870,r 448,600,940,g 470,630,760,g 500,650,740,r 545,660,760,r 575,680,870,r 600,820,960,r 620,700,860,g 630,660,840,g 680,400,660,g 730,280,430,g 745,290,490,r 790,330,520,r 820,380,450,g 845,440,590,r 875,470,600,r 887,480,910,r 905,560,800,r 920,620,860,g 935,650,880,r 943,800,1190,r 975,960,1130,g 1000,980,1180,r 1040,1010,1180,r 1050,960,1100,g 1060,900,1080,g 1080,650,950,g 1100,600,800,g 1119,650,1260,r 1130,480,960,g 1150,640,860,g 1180,550,720,g',
    s: '45,420,640,r 58,430,620,r 75,430,610,g 95,290,530,g 120,260,380,g 135,300,420,r 145,350,430,r 190,430,530,r 215,400,590,r 235,400,480,g 250,330,470,g 268,310,420,g 285,310,430,r 310,450,600,r 336,540,700,r 352,540,660,g 375,480,620,g 395,420,550,g 408,450,640,r 416,480,785,r 430,400,640,g 438,310,600,g 452,300,480,g 467,370,460,r 480,400,510,r 500,450,640,r 515,450,560,g 530,410,560,g 555,400,540,g 565,400,480,r 573,170,440,g 598,60,190,g 600,100,190,g' }, 1.775) +
  line(smooth(cat({
    r: '6,510 70,410 110,290 135,225 165,150 200,150 225,190 260,250 300,280 340,300 380,420 440,530 490,575 545,610 580,655 615,690 640,695 670,675 735,575 790,530 840,510 880,512 930,590 960,670 1010,775 1060,865 1080,862 1110,825 1150,810 1200,770',
    s: '90,575 115,535 150,500 200,480 260,470 300,462 340,490 380,512 420,510 440,505 475,487 520,498 550,500 575,480 600,432' })), '#ff2f2f', 4, 'stroke-opacity=".8"') +
  line(smooth(cat({
    r: '6,370 50,305 90,100 120,30 150,10 190,20 215,100 250,230 290,330 330,345 350,440 385,600 420,640 460,682 545,693 580,740 615,790 640,775 670,700 735,475 780,440 830,450 880,490 910,620 935,660 960,840 1000,940 1035,1005 1065,1020 1090,900 1110,830 1140,810 1160,755 1200,730',
    s: '90,545 115,460 150,408 200,430 240,445 285,418 320,460 350,520 370,550 400,518 430,555 450,490 475,465 520,510 555,490 570,450 600,350' })), '#2a2aff', 2.6, 'stroke-opacity=".8"') +
  line(smooth(cat({ r: '6,310 50,270 85,80 100,0' })), '#9c27b0', 2.6, 'stroke-opacity=".7"') +
  line(smooth(cat({
    r: '190,0 210,130 240,270 270,385 300,385 328,355 345,520 370,640 390,690 420,700 460,730 500,690 545,700 580,760 615,810 640,760 690,620 735,425 780,420 830,450 880,510 905,660 935,720 960,900 1000,1005 1030,1055 1060,1050 1090,880 1115,760 1140,770 1160,730 1180,700 1200,720',
    s: '90,520 115,400 145,372 180,410 240,455 285,415 320,480 345,560 365,575 400,520 430,560 455,460 475,440 500,490 530,515 560,470 600,292' })), '#9c27b0', 2.6, 'stroke-opacity=".7"') +
  line(cat({ r: '740,270 885,800 1000,1170 1005,945 1035,1180 1093,585 1122,1463', s: '50,625 97,220 182,528 208,335 215,597 268,305 336,704 398,415 416,785 452,297 496,645 575,112' }), '#8e24aa', 1.6) +
  '<path d="M1183.500 260V517" stroke="#ff4d5c"/>' +
  wave('r', 537, 1015, 0, '(a)') + wave('r', 722, 272, 0, '(b)') + wave('s', 56, 1124, 0, '(c)') +
  marks('left', { r: '85,250 345,363 453,740 564,732 766,424 798,419 850,443 1136,804', s: '67,527 166,377 274,451 423,516 555,530' }) +
  marks('right', { r: '62,228 300,354 404,696 464,740 564,751 612,837 760,402 817,437 1030,1091 1125,713', s: '79,535 238,452 258,435 375,541 430,535 522,523 540,509' }) +
  marks('up', { r: '52,295 75,275 185,15 310,412 415,790 460,755 574,906 623,886 771,469 828,494 1041,1142 1136,855', s: '88,586 247,500 268,484 385,590 438,578 533,608 549,557' }) +
  marks('mag', { r: '70,85 334,310 442,690 553,682 756,287 788,367 839,395 1125,588', s: '55,476 155,326 263,341 412,467 544,392' }) +
  marks('down', { r: '70,10 334,237 442,615 553,608 756,214 788,295 839,322 1125,516', s: '55,405 155,251 263,268 412,396 544,320' }));
put('b-main-axis', 1561, 37, axisText(1568, bLabels.filter(l => l[0] !== 63500)) + tag(1560, 120, 25, '#53b987', ['63650.57', '56:58'], 'dark') + tag(1560, 105, 15, '#ff4f5e', ['63788.54']));

const bHist = [[2000, 546.5], [1000, 584.5], [0, 621.5], [-1000, 659.5], [-2000, 696.5]];
put('b-hist', 812, 538, grid(bx, bHist.map(l => l[1])) + bars([
  ['u', '6,141 30,143 50,170 68,228 80,205 95,140 110,111 130,135 145,215 157,270'], ['u', '315,262 327,222 335,245 342,268'], ['u', '450,260 465,225 485,205 515,211 535,235 548,268'],
  ['u', '636,262 655,180 680,115 700,76 730,98 750,175 765,225 780,268'], ['u', '1065,250 1080,160 1100,70 1115,48 1120,75 1133,80 1150,140 1180,165 1200,188'],
  ['v', '30,189 40,190 52,188 58,215 75,195 90,205 107,192 125,220 140,268'], ['v', '232,260 240,240 253,226 265,235 275,262'], ['v', '365,255 375,235 387,250 397,245 415,195 432,168 445,188 460,235 478,265'], ['v', '537,260 548,200 568,113'],
  ['u', '157,290 175,365 203,355 230,440 262,490 272,492 290,420 312,300'], ['u', '345,290 370,400 390,452 405,440 425,360 448,290'], ['u', '550,280 580,320 605,345 617,340 635,285'],
  ['u', '782,285 800,345 815,355 835,330 860,327 880,315 900,380 915,412 935,392 950,430 962,460 990,415 1025,380 1045,310 1060,276'],
  ['v', '145,290 165,340 190,350 210,320 230,285'], ['v', '282,290 305,370 325,388 340,370 362,285'], ['v', '485,290 508,347 525,310 535,280']], 621.3, 1.775, 2) +
  zero(812, 1390, 621.5, [[912, 913], [923, 924], [955, 1002], [1023, 1025], [1154, 1169], [1220, 1221], [1270, 1289], [1324, 1337], [1380, 1381]]));
put('b-hist-axis', 1561, 538, axisText(1568, bHist));

const bRsi = [[100, 706.5], [80, 739.5], [60, 773.5], [40, 806.5], [20, 840.5]];
put('b-rsi', 812, 704, grid(bx, bRsi.map(l => l[1])) +
  line(cat({
    u: '6,715 40,718 63,710 85,655 97,670 107,670 125,700 144,743 158,742 166,752 180,715 195,755 203,757 210,805 226,815 240,812 258,820 275,798 295,800 304,785 325,790 333,845 355,850 376,845 400,830 420,828 441,838 452,805 470,810 500,808 530,805 557,825 580,825 598,838 615,820 625,790 636,795 647,762 674,757 684,733 706,732 728,708 738,735 770,740 795,765 806,768 828,755 843,785 866,777 880,790 886,840 893,845 910,833 925,815 940,860 958,872 980,860 1003,850 1025,860 1040,843 1062,835 1072,765 1085,755 1100,740 1116,755 1130,745 1146,778 1165,752 1185,758',
    v: '25,780 55,765 68,730 80,740 95,737 120,755 135,770 142,765 155,775 184,780 200,778 217,765 227,775 243,745 255,770 275,785 283,805 305,820 320,808 345,800 354,768 370,767 383,820 400,790 412,748 428,750 445,780 460,800 470,785 490,790 508,790 526,760 535,765 545,717 555,722 564,718' }), '#2196f3', 2.4) +
  line(cat({
    u: '6,612 10,740 15,770 25,735 32,777 50,690 57,755 63,835 72,620 78,555 85,548 91,557 100,640 107,625 117,790 123,803 128,765 137,890 144,935 155,882 164,928 180,643 188,750 195,850 200,820 210,945 226,963 234,910 249,922 255,950 266,810 275,730 281,713 295,800 304,655 310,670 315,765 322,700 333,945 343,980 350,955 354,970 366,880 376,912 392,755 398,768 407,707 415,785 423,835 430,795 441,938 452,672 462,750 473,740 480,745 492,832 500,780 513,732 520,822 530,745 545,890 557,945 568,775 578,920 585,860 596,925 607,793 616,780 626,655 635,715 647,608 658,592 665,625 673,648 683,572 700,577 706,620 716,575 728,555 738,770 749,875 757,790 770,750 783,850 795,922 806,935 815,750 827,685 843,937 853,835 860,845 865,770 878,900 886,992 892,995 905,890 908,915 925,747 940,950 958,980 966,855 980,880 990,850 1002,775 1010,855 1025,920 1035,745 1048,730 1062,680 1070,555 1078,547 1085,565 1100,550 1106,650 1115,690 1119,922 1130,708 1145,810 1155,710 1168,687 1180,770 1195,875',
    v: '30,800 37,820 50,760 60,640 68,577 80,675 90,643 100,700 110,820 120,865 135,945 141,847 150,912 157,913 167,740 172,805 178,758 184,878 198,850 207,740 217,678 227,808 237,640 243,620 252,770 260,850 270,893 275,870 283,950 290,948 305,983 315,870 322,800 328,763 332,780 340,700 350,600 355,590 362,607 370,598 376,850 382,935 387,937 395,800 408,630 424,640 435,740 450,900 460,948 470,830 476,880 485,790 497,742 508,805 517,670 524,640 533,710 545,573 550,600 557,625 564,612' }), '#4caf50', 2.6) +
  line(cat({
    u: '6,650 12,695 25,695 32,708 50,692 63,730 75,610 85,592 93,600 97,630 107,630 117,700 128,700 137,780 144,802 157,795 165,815 180,708 190,790 203,795 210,868 226,887 235,872 249,880 256,890 266,845 281,818 293,830 304,775 315,795 323,775 333,888 343,910 355,912 366,880 376,892 392,840 408,820 420,838 432,838 441,880 452,760 465,788 480,785 493,800 505,795 515,780 522,800 530,785 545,830 557,850 568,805 578,862 587,840 598,878 607,830 615,825 620,760 628,742 636,760 647,692 660,682 674,692 684,650 706,652 716,635 728,615 738,705 749,755 757,730 770,715 783,760 795,795 806,808 816,758 828,740 843,845 852,815 866,790 878,870 886,925 893,930 905,890 912,895 925,825 940,912 958,935 966,888 980,900 990,885 1003,860 1025,890 1037,835 1050,828 1062,805 1070,670 1078,652 1088,660 1102,635 1110,680 1116,690 1119,812 1130,715 1146,775 1155,730 1172,720 1182,765 1195,785',
    v: '30,775 50,765 60,700 68,675 80,705 90,692 105,712 110,740 120,755 135,800 142,780 155,812 166,770 178,770 184,820 200,812 215,755 227,790 237,715 243,703 252,770 265,815 275,820 283,865 292,870 305,893 315,860 322,855 328,825 335,830 345,800 354,722 372,722 380,860 387,865 397,800 408,705 426,702 437,750 450,800 460,840 470,795 476,825 487,795 498,775 508,795 517,740 526,728 535,745 545,652 555,670 564,662' }), '#ff5252', 4.4));
put('b-rsi-axis', 1561, 704, axisText(1568, bRsi));
put('b-time', 812, 872, timeText([['20', 822], ['22', 907], ['25', 1034], ['27', 1120], ['29', 1205], ['Nov', 1332], ['3', 1417], ['5', 1502]]));
```
